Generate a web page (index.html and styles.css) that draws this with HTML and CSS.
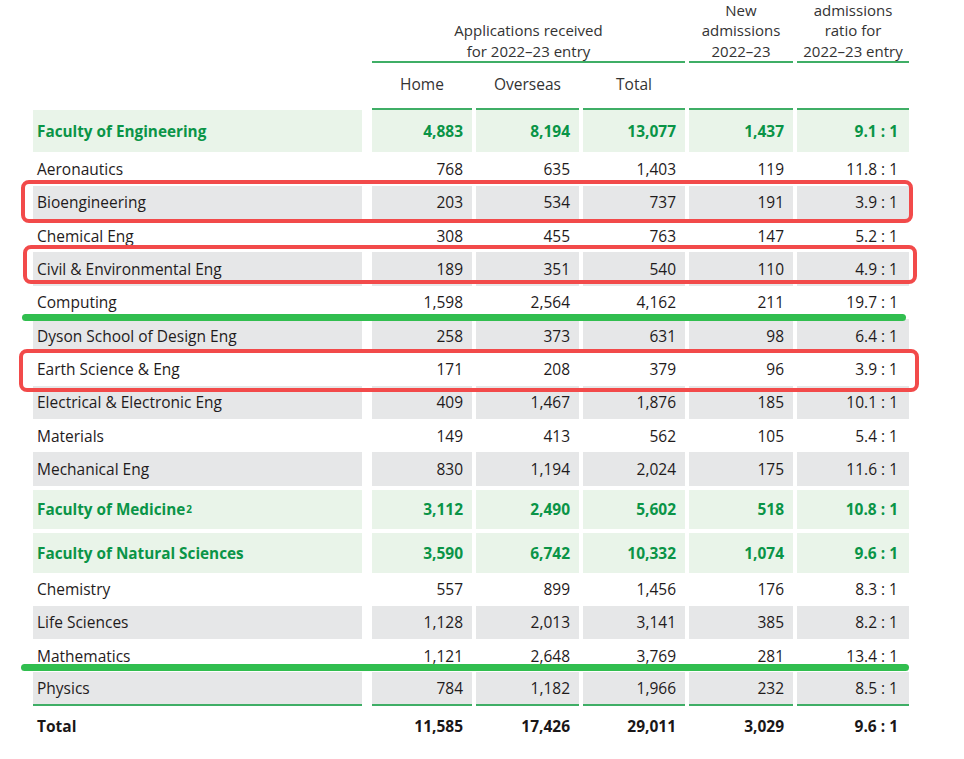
FILE: index.html
```html
<!DOCTYPE html>
<html lang="en">
<head>
<meta charset="utf-8">
<title>Applications and admissions 2022–23</title>
<link rel="stylesheet" href="styles.css">
</head>
<body>
<div class="page">
  <div class="row head1">
    <div class="blank"></div>
    <div class="hcell span3">Applications received<br>for 2022–23 entry</div>
    <div class="hcell">New<br>admissions<br>2022–23</div>
    <div class="hcell">admissions<br>ratio for<br>2022–23 entry</div>
  </div>
  <div class="row head2">
    <div class="blank"></div>
    <div class="hcell">Home</div>
    <div class="hcell">Overseas</div>
    <div class="hcell">Total</div>
    <div class="hcell"></div>
    <div class="hcell"></div>
  </div>

  <div class="row fac fac-eng">
    <div class="lbl">Faculty of Engineering</div><div>4,883</div><div>8,194</div><div>13,077</div><div>1,437</div><div class="ratio">9.1 : 1</div>
  </div>
  <div class="row reg">
    <div class="lbl">Aeronautics</div><div>768</div><div>635</div><div>1,403</div><div>119</div><div class="ratio">11.8 : 1</div>
  </div>
  <div class="row reg grey">
    <div class="lbl">Bioengineering</div><div>203</div><div>534</div><div>737</div><div>191</div><div class="ratio">3.9 : 1</div>
  </div>
  <div class="row reg">
    <div class="lbl">Chemical Eng</div><div>308</div><div>455</div><div>763</div><div>147</div><div class="ratio">5.2 : 1</div>
  </div>
  <div class="row reg grey">
    <div class="lbl">Civil &amp; Environmental Eng</div><div>189</div><div>351</div><div>540</div><div>110</div><div class="ratio">4.9 : 1</div>
  </div>
  <div class="row reg">
    <div class="lbl">Computing</div><div>1,598</div><div>2,564</div><div>4,162</div><div>211</div><div class="ratio">19.7 : 1</div>
  </div>
  <div class="row reg grey">
    <div class="lbl">Dyson School of Design Eng</div><div>258</div><div>373</div><div>631</div><div>98</div><div class="ratio">6.4 : 1</div>
  </div>
  <div class="row reg">
    <div class="lbl">Earth Science &amp; Eng</div><div>171</div><div>208</div><div>379</div><div>96</div><div class="ratio">3.9 : 1</div>
  </div>
  <div class="row reg grey">
    <div class="lbl">Electrical &amp; Electronic Eng</div><div>409</div><div>1,467</div><div>1,876</div><div>185</div><div class="ratio">10.1 : 1</div>
  </div>
  <div class="row reg">
    <div class="lbl">Materials</div><div>149</div><div>413</div><div>562</div><div>105</div><div class="ratio">5.4 : 1</div>
  </div>
  <div class="row reg grey">
    <div class="lbl">Mechanical Eng</div><div>830</div><div>1,194</div><div>2,024</div><div>175</div><div class="ratio">11.6 : 1</div>
  </div>

  <div class="row fac fac-med">
    <div class="lbl">Faculty of Medicine<sup>2</sup></div><div>3,112</div><div>2,490</div><div>5,602</div><div>518</div><div class="ratio">10.8 : 1</div>
  </div>
  <div class="row fac fac-nat">
    <div class="lbl">Faculty of Natural Sciences</div><div>3,590</div><div>6,742</div><div>10,332</div><div>1,074</div><div class="ratio">9.6 : 1</div>
  </div>
  <div class="row reg">
    <div class="lbl">Chemistry</div><div>557</div><div>899</div><div>1,456</div><div>176</div><div class="ratio">8.3 : 1</div>
  </div>
  <div class="row reg grey">
    <div class="lbl">Life Sciences</div><div>1,128</div><div>2,013</div><div>3,141</div><div>385</div><div class="ratio">8.2 : 1</div>
  </div>
  <div class="row reg">
    <div class="lbl">Mathematics</div><div>1,121</div><div>2,648</div><div>3,769</div><div>281</div><div class="ratio">13.4 : 1</div>
  </div>
  <div class="row reg grey last">
    <div class="lbl">Physics</div><div>784</div><div>1,182</div><div>1,966</div><div>232</div><div class="ratio">8.5 : 1</div>
  </div>
  <div class="row total">
    <div class="lbl">Total</div><div>11,585</div><div>17,426</div><div>29,011</div><div>3,029</div><div class="ratio">9.6 : 1</div>
  </div>

  <div class="mark box box-1"></div>
  <div class="mark box box-2"></div>
  <div class="mark box box-3"></div>
  <div class="mark line line-1"></div>
  <div class="mark line line-2"></div>
</div>
</body>
</html>
```
FILE: styles.css
```css
* { box-sizing: border-box; }
html, body { margin: 0; padding: 0; background: #ffffff; }
body {
  font-family: "Open Sans", "Noto Sans", sans-serif;
  font-size: 15.5px;
  color: #1f1b1c;
  overflow: hidden;
}
.page {
  position: relative;
  padding-left: 33px;
  width: 964px;
}
.row {
  display: grid;
  grid-template-columns: 329px 106px 103px 102px 104px 112px;
  column-gap: 4px;
}
.row > :nth-child(2) { margin-left: 6px; }

/* body cells */
.row > div {
  display: flex;
  align-items: center;
  justify-content: flex-end;
  padding-right: 9px;
  white-space: nowrap;
}
.row > div.lbl {
  justify-content: flex-start;
  padding-left: 4px;
  padding-right: 0;
}
.row > div.ratio { padding-right: 11px; }

/* headers */
.row > div.hcell {
  display: block;
  padding-right: 0;
  text-align: center;
  color: #333333;
  line-height: 20px;
  border-bottom: 2px solid #3fae66;
}
.head1 > div.hcell {
  font-size: 15px;
  line-height: 20.4px;
  padding-bottom: 0;
  align-self: end;
}
.head1 .span3 { grid-column: span 3; }
.head2 { height: 47px; }
.head2 > div.hcell { padding-top: 11px; padding-bottom: 14px; height: 47px; }

.reg { height: 33.33px; }
.grey > div { background: #e6e7e8; }

.fac > div {
  background: #e9f4e9;
  color: #0a9447;
  font-weight: 700;
}
.fac > div.lbl { font-size: 15.3px; }
.fac-eng { height: 42px; }
.fac-med { height: 39px; margin-top: 4px; }
.fac-nat { height: 40px; margin-top: 4px; }
.fac sup {
  font-size: 0.65em;
  vertical-align: 0.45em;
  line-height: 0;
  margin-left: 1px;
}

.last { height: 34px; }
.last > div { border-bottom: 2px solid #3fae66; }

.total { height: 40px; }
.total > div { font-weight: 700; color: #1a1718; }

/* annotation overlays */
.mark { position: absolute; pointer-events: none; }
.box {
  border: 4px solid #f24a4a;
  border-radius: 8px;
}
.box-1 { left: 21px; top: 180px; width: 892px; height: 43px; }
.box-2 { left: 23px; top: 245px; width: 894px; height: 39px; }
.box-3 { left: 19px; top: 349px; width: 900px; height: 43px; }
.line {
  background: #31be4f;
  border-radius: 4px;
  height: 7px;
}
.line-1 { left: 22px; top: 314px; width: 884px; }
.line-2 { left: 21px; top: 664px; width: 888px; }
```
